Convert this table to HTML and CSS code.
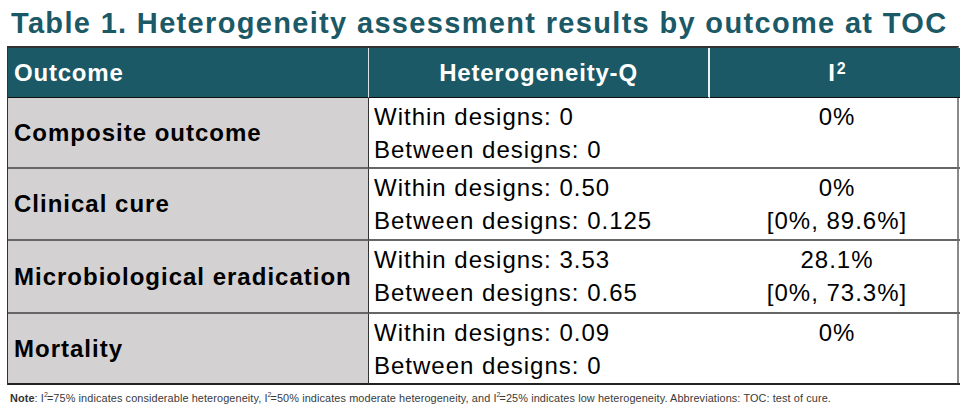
FILE: index.html
```html
<!DOCTYPE html>
<html>
<head>
<meta charset="utf-8">
<link rel="stylesheet" href="styles.css">
</head>
<body>
<div class="page">
  <h1 class="title">Table 1. Heterogeneity assessment results by outcome at TOC</h1>
  <div class="table">
    <div class="th th-outcome">Outcome</div>
    <div class="th th-q">Heterogeneity-Q</div>
    <div class="th th-i"><span>I<sup>2</sup></span></div>

    <div class="outcome">Composite outcome</div>
    <div class="q"><span>Within designs: 0</span><span>Between designs: 0</span></div>
    <div class="i2"><span>0%</span></div>

    <div class="outcome">Clinical cure</div>
    <div class="q"><span>Within designs: 0.50</span><span>Between designs: 0.125</span></div>
    <div class="i2"><span>0%</span><span>[0%, 89.6%]</span></div>

    <div class="outcome">Microbiological eradication</div>
    <div class="q"><span>Within designs: 3.53</span><span>Between designs: 0.65</span></div>
    <div class="i2"><span>28.1%</span><span>[0%, 73.3%]</span></div>

    <div class="outcome last">Mortality</div>
    <div class="q last"><span>Within designs: 0.09</span><span>Between designs: 0</span></div>
    <div class="i2 last"><span>0%</span></div>
  </div>
  <p class="note"><b>Note</b>: I<sup>2</sup>=75% indicates considerable heterogeneity, I<sup>2</sup>=50% indicates moderate heterogeneity, and I<sup>2</sup>=25% indicates low heterogeneity. Abbreviations: TOC: test of cure.</p>
</div>
</body>
</html>
```

FILE: styles.css
```css
html, body {
  margin: 0;
  padding: 0;
  background: #ffffff;
}
body {
  font-family: "Liberation Sans", Arial, sans-serif;
  color: #000;
}
.page {
  padding: 7px 0 0 7px;
  width: 952px;
}
.title {
  margin: 0 0 7px 4px;
  font-size: 29px;
  line-height: 32px;
  font-weight: bold;
  color: #1b5966;
  letter-spacing: 1.33px;
  white-space: nowrap;
}
.table {
  display: grid;
  grid-template-columns: 361px 341px 250px;
  grid-template-rows: 50px 71px 72px 73px 71px;
  border-top: 2px solid #333;
  border-left: 1px solid #333;
  border-right: 2px solid #8a8a8a;
  box-sizing: border-box;
  width: 952px;
}
.th {
  background: #1a5965;
  color: #fff;
  font-weight: bold;
  font-size: 24px;
  letter-spacing: 0.8px;
  display: flex;
  align-items: center;
  border-bottom: 1px solid #111;
}
.th-outcome {
  padding-left: 6px;
  border-right: 1px solid #d8e4e6;
}
.th-q {
  justify-content: center;
  border-right: 2px solid #e8f0f2;
}
.th-i {
  justify-content: center;
  padding-left: 4px;
}
.th-i sup {
  font-size: 16px;
  line-height: 0;
  vertical-align: 0.4em;
  letter-spacing: 0;
  margin-left: 1px;
}
.outcome {
  background: #d3d1d2;
  font-weight: bold;
  font-size: 24px;
  letter-spacing: 1px;
  display: flex;
  align-items: center;
  padding-left: 6px;
  border-right: 1px solid #333;
  border-bottom: 2px solid #666;
}
.q, .i2 {
  display: flex;
  flex-direction: column;
  font-size: 24px;
  line-height: 33px;
  letter-spacing: 1px;
  padding-top: 2px;
  border-bottom: 2px solid #666;
}
.q {
  padding-left: 5px;
}
.i2 {
  align-items: center;
  padding-left: 4px;
}
.last {
  border-bottom: 2px solid #222;
}
.note {
  margin: 7px 0 0 3px;
  font-size: 10.9px;
  color: #3a3a3a;
  letter-spacing: 0.1px;
  white-space: nowrap;
}
.note b {
  color: #333;
}
.note sup {
  font-size: 7px;
  line-height: 0;
  letter-spacing: -1px;
}
```
